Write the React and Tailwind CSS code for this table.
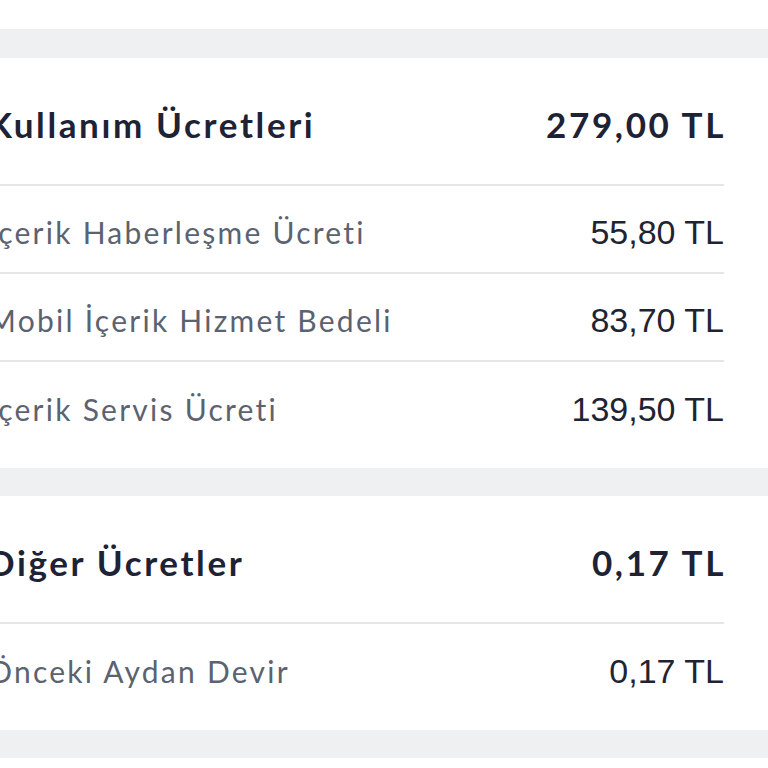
const usage = [
    { label: 'İçerik Haberleşme Ücreti', value: '55,80 TL' },
    { label: 'Mobil İçerik Hizmet Bedeli', value: '83,70 TL' },
    { label: 'İçerik Servis Ücreti', value: '139,50 TL' },
];

const other = [
    { label: 'Önceki Aydan Devir', value: '0,17 TL' },
];

const FeeCard = ({ title, total, items }) => (
    <section className="bg-white -ml-[12px] pr-[44px] pb-[18px]">
        <div className="h-[128px] pt-[6px] flex items-center justify-between border-b-2 border-[#e4e6e9]">
            <h2 className="text-[35px] font-bold tracking-[0.075em] text-[#1e2235] font-['Lato',sans-serif]">{title}</h2>
            <span className="text-[35px] font-bold tracking-[0.075em] -mr-[2px] text-[#1e2235] font-['Lato',sans-serif]">{total}</span>
        </div>
        {items.map((item, i) => (
            <div
                key={item.label}
                className={`h-[88px] pt-[6px] flex items-center justify-between ${i < items.length - 1 ? 'border-b-2 border-[#e4e6e9]' : ''}`}
            >
                <span className="text-[30px] tracking-[0.075em] text-[#5b6270] font-['Lato',sans-serif]">{item.label}</span>
                <span className="text-[34px] text-[#1f2433] font-['Liberation_Sans',sans-serif]">{item.value}</span>
            </div>
        ))}
    </section>
);

const App = () => {
    return (
        <div className="min-h-screen bg-white overflow-hidden">
            <div className="h-[29px]" />
            <div className="h-[29px] bg-[#eef0f2]" />
            <FeeCard title="Kullanım Ücretleri" total="279,00 TL" items={usage} />
            <div className="h-[28px] bg-[#eef0f2]" />
            <FeeCard title="Diğer Ücretler" total="0,17 TL" items={other} />
            <div className="h-[28px] bg-[#eef0f2]" />
        </div>
    );
};

export default App;
